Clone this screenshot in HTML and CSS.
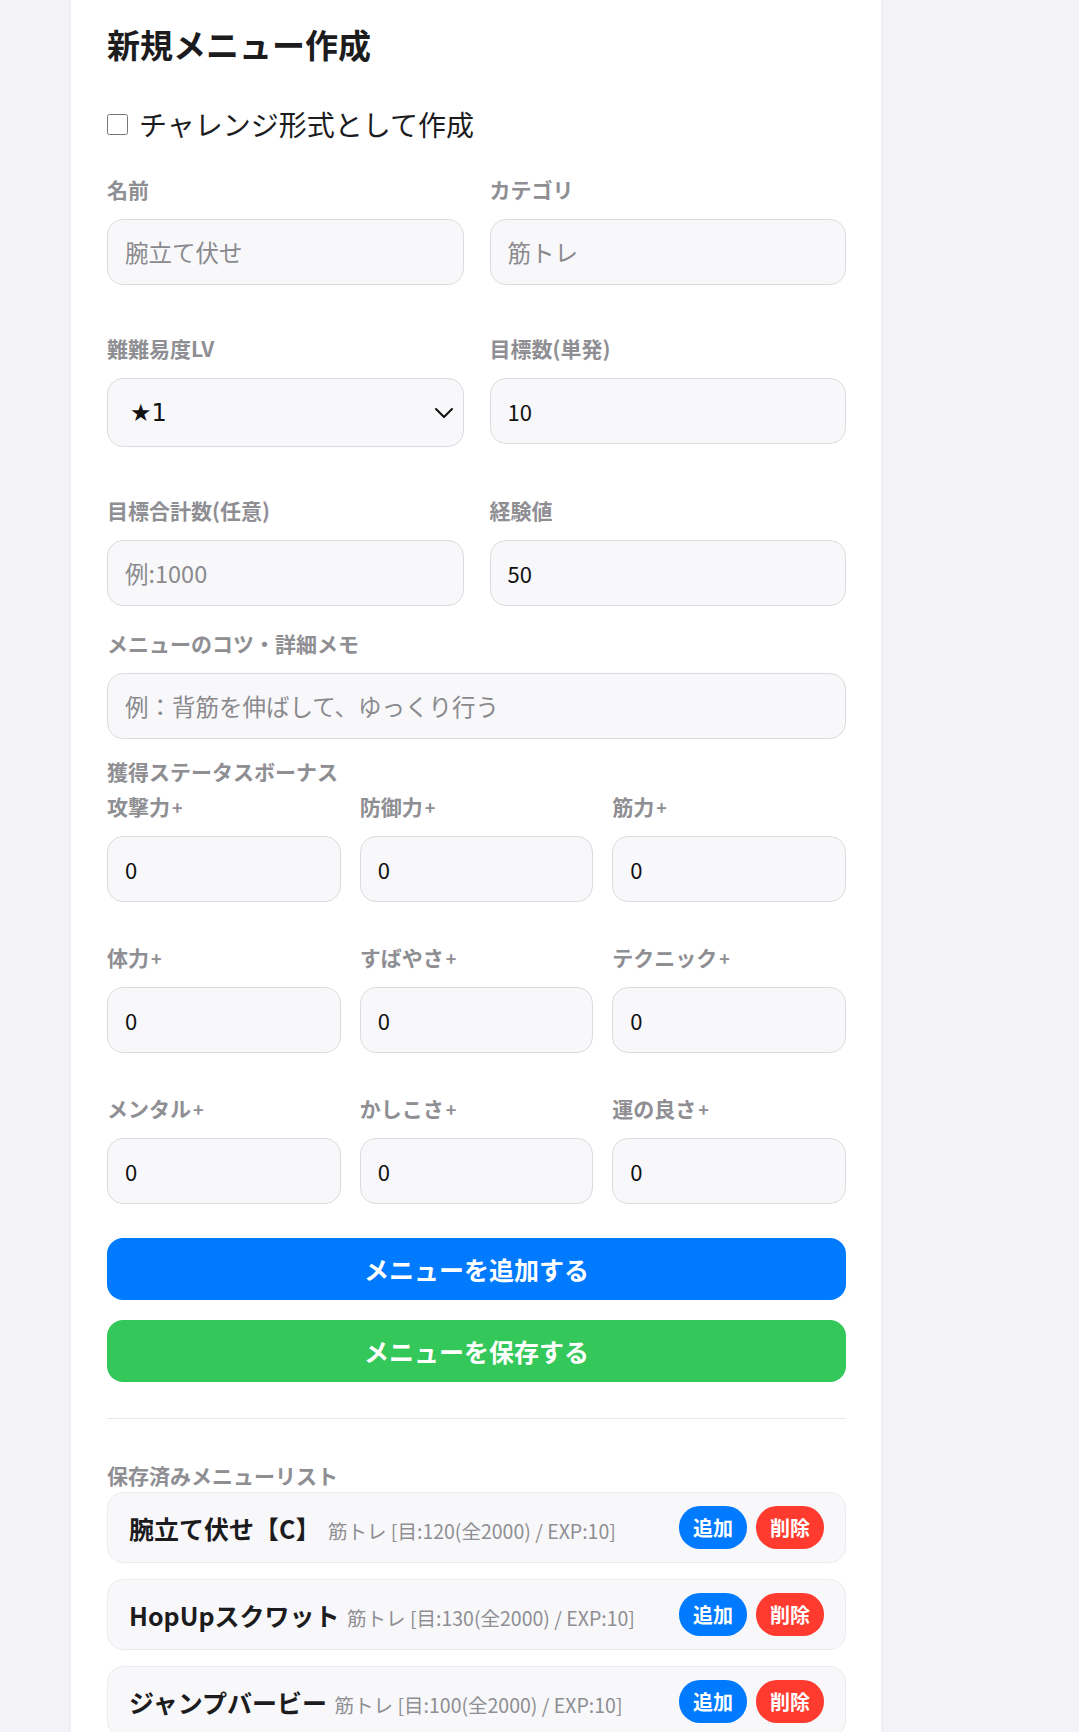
FILE: index.html
```html
<!DOCTYPE html>
<html lang="ja">
<head>
<meta charset="utf-8">
<title>新規メニュー作成</title>
<link rel="stylesheet" href="styles.css">
</head>
<body>
<div class="card">
  <h2 class="title">新規メニュー作成</h2>
  <label class="check-row"><input type="checkbox" class="check"><span>チャレンジ形式として作成</span></label>

  <div class="grid2">
    <div class="field">
      <label class="lbl">名前</label>
      <input class="inp" type="text" placeholder="腕立て伏せ">
    </div>
    <div class="field">
      <label class="lbl">カテゴリ</label>
      <input class="inp" type="text" placeholder="筋トレ">
    </div>
    <div class="field">
      <label class="lbl">難難易度LV</label>
      <div class="select-wrap">
        <select class="sel"><option>★1</option></select>
        <svg class="chev" width="20" height="12" viewBox="0 0 20 12"><path d="M2 2 L10 10 L18 2" fill="none" stroke="#111" stroke-width="2" stroke-linecap="round" stroke-linejoin="round"/></svg>
      </div>
    </div>
    <div class="field">
      <label class="lbl">目標数(単発)</label>
      <input class="inp" type="text" value="10">
    </div>
    <div class="field">
      <label class="lbl">目標合計数(任意)</label>
      <input class="inp" type="text" placeholder="例:1000">
    </div>
    <div class="field">
      <label class="lbl">経験値</label>
      <input class="inp" type="text" value="50">
    </div>
  </div>

  <div class="field memo">
    <label class="lbl">メニューのコツ・詳細メモ</label>
    <input class="inp" type="text" placeholder="例：背筋を伸ばして、ゆっくり行う">
  </div>

  <div class="lbl section">獲得ステータスボーナス</div>
  <div class="grid3">
    <div class="field"><label class="lbl">攻撃力<span class="plus">+</span></label><input class="inp" type="text" value="0"></div>
    <div class="field"><label class="lbl">防御力<span class="plus">+</span></label><input class="inp" type="text" value="0"></div>
    <div class="field"><label class="lbl">筋力<span class="plus">+</span></label><input class="inp" type="text" value="0"></div>
    <div class="field"><label class="lbl">体力<span class="plus">+</span></label><input class="inp" type="text" value="0"></div>
    <div class="field"><label class="lbl">すばやさ<span class="plus">+</span></label><input class="inp" type="text" value="0"></div>
    <div class="field"><label class="lbl">テクニック<span class="plus">+</span></label><input class="inp" type="text" value="0"></div>
    <div class="field"><label class="lbl">メンタル<span class="plus">+</span></label><input class="inp" type="text" value="0"></div>
    <div class="field"><label class="lbl">かしこさ<span class="plus">+</span></label><input class="inp" type="text" value="0"></div>
    <div class="field"><label class="lbl">運の良さ<span class="plus">+</span></label><input class="inp" type="text" value="0"></div>
  </div>

  <button class="btn btn-blue">メニューを追加する</button>
  <button class="btn btn-green">メニューを保存する</button>

  <hr class="divider">

  <div class="lbl list-title">保存済みメニューリスト</div>
  <div class="list">
    <div class="item">
      <div class="item-text"><span class="item-name">腕立て伏せ【C】</span> <span class="item-meta">筋トレ [目:120(全2000) / EXP:10]</span></div>
      <div class="item-actions"><button class="pill pill-blue">追加</button><button class="pill pill-red">削除</button></div>
    </div>
    <div class="item">
      <div class="item-text"><span class="item-name">HopUpスクワット</span> <span class="item-meta">筋トレ [目:130(全2000) / EXP:10]</span></div>
      <div class="item-actions"><button class="pill pill-blue">追加</button><button class="pill pill-red">削除</button></div>
    </div>
    <div class="item">
      <div class="item-text"><span class="item-name">ジャンプバービー</span> <span class="item-meta">筋トレ [目:100(全2000) / EXP:10]</span></div>
      <div class="item-actions"><button class="pill pill-blue">追加</button><button class="pill pill-red">削除</button></div>
    </div>
  </div>
</div>
</body>
</html>
```

FILE: styles.css
```css
* { box-sizing: border-box; }

html, body {
  margin: 0;
  padding: 0;
  background: #f2f2f7;
  font-family: "Noto Sans CJK JP", "Noto Sans", sans-serif;
  color: #1c1c1e;
}

.card {
  margin-left: 71px;
  width: 810px;
  min-height: 1800px;
  background: #ffffff;
  padding: 24px 35px 40px 36px;
  box-shadow: 0 0 6px rgba(0, 0, 0, 0.04);
}

.title {
  margin: 0 0 42px 0;
  font-size: 33px;
  line-height: 40px;
  font-weight: 700;
  color: #1c1c1e;
}

.check-row {
  display: flex;
  align-items: center;
  gap: 11px;
  height: 36px;
  margin-bottom: 33px;
  font-size: 28px;
  line-height: 36px;
  color: #1c1c1e;
}

.check {
  width: 21px;
  height: 21px;
  margin: 0;
}

.lbl {
  display: block;
  height: 28px;
  font-size: 21px;
  line-height: 28px;
  font-weight: 700;
  color: #8e8e93;
  margin-bottom: 16px;
  white-space: nowrap;
}

.plus {
  font-size: 18px;
  font-weight: 700;
  margin-left: 2px;
}

.field {
  display: flex;
  flex-direction: column;
}

.inp, .sel {
  display: block;
  width: 100%;
  height: 66px;
  margin: 0;
  padding: 0 17px;
  border: 1px solid #dcdce0;
  border-radius: 16px;
  background: #f8f8fa;
  font-family: "Noto Sans CJK JP", "Noto Sans", sans-serif;
  font-size: 22px;
  color: #111111;
  outline: none;
}

.inp::placeholder {
  color: #8a8a8e;
  opacity: 1;
  font-size: 23.5px;
}

.select-wrap {
  position: relative;
}

.sel {
  height: 69px;
  padding-left: 22px;
  appearance: none;
  -webkit-appearance: none;
  font-family: "DejaVu Sans", "Noto Sans", sans-serif;
  font-size: 24px;
}

.chev {
  position: absolute;
  right: 10px;
  top: 29px;
  pointer-events: none;
}

.grid2 {
  display: grid;
  grid-template-columns: 1fr 1fr;
  column-gap: 26px;
  row-gap: 49px;
  margin-bottom: 23px;
}

.memo {
  margin-bottom: 18px;
}

.section {
  margin-bottom: 7px;
}

.grid3 {
  display: grid;
  grid-template-columns: 1fr 1fr 1fr;
  column-gap: 19px;
  row-gap: 41px;
}

.btn {
  display: block;
  width: 100%;
  height: 62px;
  border: none;
  border-radius: 16px;
  color: #ffffff;
  font-family: "Noto Sans CJK JP", sans-serif;
  font-size: 25px;
  font-weight: 700;
  cursor: pointer;
}

.btn-blue {
  background: #007aff;
  margin-top: 34px;
}

.btn-green {
  background: #34c759;
  margin-top: 20px;
}

.divider {
  border: none;
  height: 1px;
  background: #e8e8ec;
  margin: 36px 0 42px 0;
}

.list-title {
  margin-bottom: 3px;
}

.list {
  display: flex;
  flex-direction: column;
  gap: 16px;
}

.item {
  display: flex;
  align-items: center;
  justify-content: space-between;
  height: 71px;
  padding: 0 21px 0 21px;
  border: 1px solid #ececf0;
  border-radius: 16px;
  background: #f8f8fa;
}

.item-text {
  white-space: nowrap;
}

.item-name {
  font-size: 25px;
  font-weight: 700;
  color: #1c1c1e;
}

.item-meta {
  font-size: 19.5px;
  color: #8e8e93;
  margin-left: 4px;
}

.item-actions {
  display: flex;
  gap: 9px;
}

.pill {
  height: 43px;
  padding: 0 14px;
  border: none;
  border-radius: 21px;
  color: #ffffff;
  font-family: "Noto Sans CJK JP", sans-serif;
  font-size: 20px;
  font-weight: 700;
}

.pill-blue { background: #007aff; }
.pill-red { background: #ff3b30; }
```
